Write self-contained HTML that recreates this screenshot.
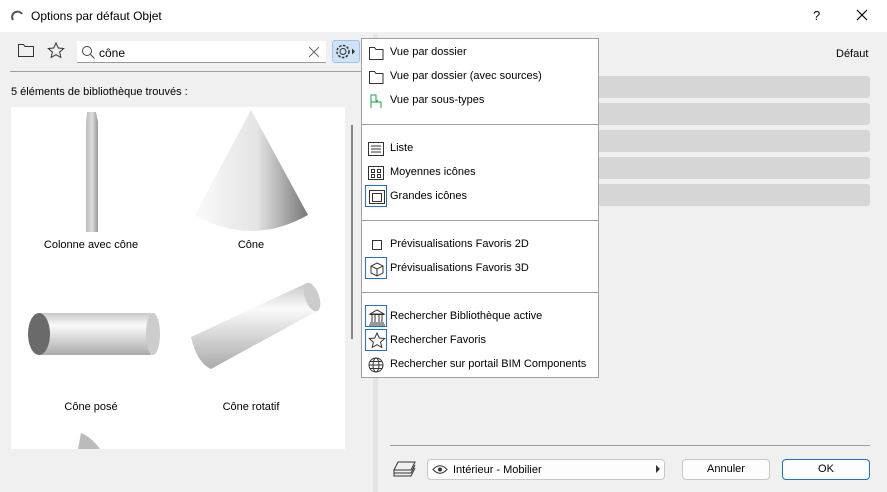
<!DOCTYPE html>
<html><head><meta charset="utf-8"><style>
*{margin:0;padding:0;box-sizing:border-box}
body{width:887px;height:492px;background:#f0f0f0;font-family:"Liberation Sans",sans-serif;font-size:11px;color:#000;position:relative;overflow:hidden}
.abs{position:absolute}
.title{left:0;top:0;width:887px;height:32px;background:#fff}
.menu{left:361px;top:38px;width:238px;height:340px;background:#fff;border:1px solid #a0a0a0}
.mi{position:absolute;left:28px;font-size:11px}
.ic{position:absolute;left:3px;width:22px;height:22px}
.sel{border:1px solid #1a73d0}
.sep{position:absolute;left:0;right:0;height:1px;background:#a0a0a0}
.bar{left:390px;width:480px;height:22px;background:#d6d6d6;border-radius:3px}
.btn{background:#fdfdfd;border:1px solid #c8c8c8;border-radius:4px;text-align:center;line-height:19px}
.lbl{position:absolute;width:170px;text-align:center;font-size:11px}
</style></head><body>
<div class="abs title"></div>
<svg class="abs" style="left:11px;top:9px" width="14" height="14"><path d="M2 11 A5 5 0 0 1 11 5" stroke="#555" stroke-width="2" fill="none"/></svg>
<div class="abs" style="left:31px;top:9px;font-size:12px">Options par défaut Objet</div>
<div class="abs" style="left:813px;top:8px;font-size:13px">?</div>
<svg class="abs" style="left:856px;top:9px" width="12" height="12"><path d="M1 1L11 11M11 1L1 11" stroke="#000" stroke-width="1.2"/></svg>

<svg class="abs" style="left:18px;top:43px" width="16" height="14"><path d="M0.5 1.5h5l1.5 2h8.5v10h-15z" stroke="#333" fill="none"/></svg>
<svg class="abs" style="left:47px;top:42px" width="18" height="17"><path d="M9 1l2.3 5 5.4.5-4.1 3.6 1.2 5.3L9 12.7 4.2 15.4l1.2-5.3L1.3 6.5l5.4-.5z" stroke="#333" fill="none"/></svg>
<div class="abs" style="left:77px;top:41px;width:249px;height:22px;background:#fff;border-bottom:1px solid #999"></div>
<svg class="abs" style="left:81px;top:45px" width="14" height="14"><circle cx="6" cy="6" r="4.5" stroke="#444" fill="none"/><path d="M9.5 9.5l4 4" stroke="#444"/></svg>
<div class="abs" style="left:99px;top:46px;font-size:12px">cône</div>
<svg class="abs" style="left:309px;top:47px" width="10" height="10"><path d="M0 0L10 10M10 0L0 10" stroke="#666"/></svg>
<div class="abs" style="left:332px;top:40px;width:28px;height:23px;background:#cfe3f7;border:1px solid #99c4ee;border-radius:3px"></div>
<svg class="abs" style="left:335px;top:43px" width="22" height="17"><circle cx="8" cy="8.5" r="3" stroke="#333" fill="none"/><circle cx="8" cy="8.5" r="6" stroke="#333" stroke-dasharray="2.5 1.5" fill="none" stroke-width="1.5"/><path d="M17 5.5l3 3-3 3z" fill="#333"/></svg>
<div class="abs" style="left:10px;top:71px;width:362px;height:1px;background:#a0a0a0"></div>
<div class="abs" style="left:11px;top:86px">5 éléments de bibliothèque trouvés :</div>

<div class="abs" style="left:11px;top:107px;width:334px;height:342px;background:#fff"></div>
<div class="abs" style="left:351px;top:125px;width:2px;height:214px;background:#888"></div>
<svg class="abs" style="left:11px;top:107px" width="334" height="342">
<defs>
<linearGradient id="g1" x1="0" x2="1"><stop offset="0" stop-color="#fafafa"/><stop offset=".55" stop-color="#e4e4e4"/><stop offset="1" stop-color="#777"/></linearGradient>
<linearGradient id="g2" x1="0" x2="0" y1="0" y2="1"><stop offset="0" stop-color="#c8c8c8"/><stop offset=".3" stop-color="#fafafa"/><stop offset="1" stop-color="#aaa"/></linearGradient>
<linearGradient id="g3" x1="0" x2="1"><stop offset="0" stop-color="#bbb"/><stop offset=".5" stop-color="#ddd"/><stop offset="1" stop-color="#999"/></linearGradient>
</defs>
<path d="M76 5h9l2 10v110h-12V15z" fill="url(#g3)"/>
<path d="M240 3L297 108Q240 140 184 108z" fill="url(#g1)"/>
<path d="M28 206H140V248H28z" fill="url(#g2)"/>
<ellipse cx="142" cy="227" rx="7" ry="21" fill="#ccc"/>
<ellipse cx="28" cy="227" rx="11" ry="21" fill="#6a6a6a"/>
<path d="M180 230L296 176L306 204L200 262Q186 256 180 230z" fill="url(#g2)"/>
<ellipse cx="301" cy="190" rx="7" ry="15" fill="#ccc" transform="rotate(-20 301 190)"/>
<path d="M70 326Q80 330 89 342H67z" fill="#bbb"/>
</svg>
<div class="lbl" style="left:6px;top:239px">Colonne avec cône</div>
<div class="lbl" style="left:166px;top:239px">Cône</div>
<div class="lbl" style="left:6px;top:401px">Cône posé</div>
<div class="lbl" style="left:166px;top:401px">Cône rotatif</div>

<div class="abs" style="left:373px;top:34px;width:5px;height:458px;background:#e4e4e4"></div>
<div class="abs" style="left:836px;top:48px">Défaut</div>
<div class="abs bar" style="top:76px"></div>
<div class="abs bar" style="top:103px"></div>
<div class="abs bar" style="top:130px"></div>
<div class="abs bar" style="top:157px"></div>
<div class="abs bar" style="top:184px"></div>

<div class="abs" style="left:390px;top:445px;width:480px;height:1px;background:#a0a0a0"></div>
<svg class="abs" style="left:393px;top:461px" width="24" height="16"><path d="M5 1h17l-4 8H1z M1 9v3h17l4-8 M1 12v3h17l4-8" stroke="#333" fill="none"/></svg>
<div class="abs btn" style="left:427px;top:459px;width:238px;height:21px;text-align:left"></div>
<svg class="abs" style="left:432px;top:464px" width="16" height="11"><path d="M1 5.5Q8 -2 15 5.5Q8 13 1 5.5z" stroke="#333" fill="none"/><circle cx="8" cy="5.5" r="2" fill="#333"/></svg>
<div class="abs" style="left:453px;top:464px">Intérieur - Mobilier</div>
<svg class="abs" style="left:656px;top:465px" width="5" height="8"><path d="M0 0l4 4-4 4z" fill="#333"/></svg>
<div class="abs btn" style="left:682px;top:459px;width:88px;height:21px">Annuler</div>
<div class="abs btn" style="left:782px;top:459px;width:88px;height:21px;border-color:#1a73d0">OK</div>

<div class="abs menu">
<svg class="ic" style="top:3px" width="22" height="22"><path d="M4.5 5.5h5l1.5 2h7v10h-13.5z" stroke="#333" fill="none"/></svg>
<div class="mi" style="top:7px">Vue par dossier</div>
<svg class="ic" style="top:27px" width="22" height="22"><path d="M4.5 5.5h5l1.5 2h7v10h-13.5z" stroke="#333" fill="none"/></svg>
<div class="mi" style="top:31px">Vue par dossier (avec sources)</div>
<svg class="ic" style="top:51px" width="22" height="22"><path d="M6 18V5h5v7h5v6M6 12h10M11 12l2-2" stroke="#1aa34a" fill="none"/></svg>
<div class="mi" style="top:55px">Vue par sous-types</div>
<div class="sep" style="top:85px"></div>
<svg class="ic" style="top:99px" width="22" height="22"><rect x="3.5" y="4.5" width="15" height="13" stroke="#333" fill="none"/><path d="M6 8h10M6 11h10M6 14h10" stroke="#333"/></svg>
<div class="mi" style="top:103px">Liste</div>
<svg class="ic" style="top:123px" width="22" height="22"><rect x="3.5" y="4.5" width="15" height="13" stroke="#333" fill="none"/><rect x="6.5" y="7.5" width="3" height="3" stroke="#333" fill="none"/><rect x="12.5" y="7.5" width="3" height="3" stroke="#333" fill="none"/><rect x="6.5" y="12.5" width="3" height="3" stroke="#333" fill="none"/><rect x="12.5" y="12.5" width="3" height="3" stroke="#333" fill="none"/></svg>
<div class="mi" style="top:127px">Moyennes icônes</div>
<svg class="ic sel" style="top:146px" width="24" height="24"><rect x="3.5" y="4.5" width="15" height="13" stroke="#333" fill="none"/><rect x="6.5" y="7.5" width="9" height="8" stroke="#333" fill="none"/></svg>
<div class="mi" style="top:151px">Grandes icônes</div>
<div class="sep" style="top:181px"></div>
<svg class="ic" style="top:195px" width="22" height="22"><rect x="7.5" y="6.5" width="9" height="9" stroke="#333" fill="none"/></svg>
<div class="mi" style="top:199px">Prévisualisations Favoris 2D</div>
<svg class="ic sel" style="top:218px" width="24" height="24"><path d="M11 5l6 3v7l-6 3-6-3V8z M5 8l6 3 6-3 M11 11v7" stroke="#333" fill="none"/></svg>
<div class="mi" style="top:223px">Prévisualisations Favoris 3D</div>
<div class="sep" style="top:253px"></div>
<svg class="ic sel" style="top:266px" width="24" height="24"><path d="M4 8l7-4 7 4z M4 8.5h14 M6 9v7M9 9v7M13 9v7M16 9v7 M4 17h14 M3 19h16" stroke="#333" fill="none"/></svg>
<div class="mi" style="top:271px">Rechercher Bibliothèque active</div>
<svg class="ic sel" style="top:290px" width="24" height="24"><path d="M11 3l2.3 5 5.4.5-4.1 3.6 1.2 5.3L11 14.7 6.2 17.4l1.2-5.3L3.3 8.5l5.4-.5z" stroke="#333" fill="none"/></svg>
<div class="mi" style="top:295px">Rechercher Favoris</div>
<svg class="ic" style="top:315px" width="22" height="22"><circle cx="11" cy="11" r="7" stroke="#333" fill="none"/><ellipse cx="11" cy="11" rx="3" ry="7" stroke="#333" fill="none"/><path d="M4 11h14M5 7.5h12M5 14.5h12" stroke="#333"/></svg>
<div class="mi" style="top:319px">Rechercher sur portail BIM Components</div>
</div>
</body></html>
